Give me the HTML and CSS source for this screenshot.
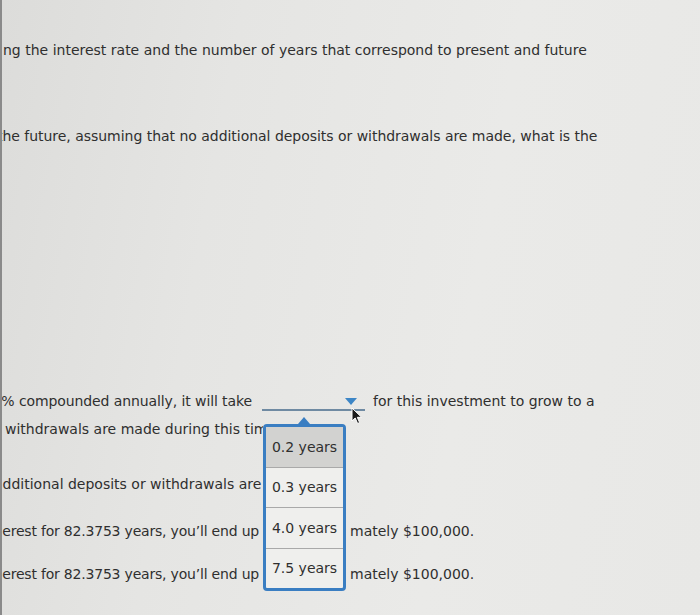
FILE: index.html
```html
<!DOCTYPE html>
<html>
<head>
<meta charset="utf-8">
<link rel="stylesheet" href="styles.css">
</head>
<body>
<div class="page">
  <p class="line l1">ng the interest rate and the number of years that correspond to present and future</p>
  <p class="line l2">the future, assuming that no additional deposits or withdrawals are made, what is the</p>

  <div class="row l3">
    <span class="left end"><span>0% compounded annually, it will take</span></span>
    <span class="select"><span class="caret"></span></span>
    <span class="right">for this investment to grow to a</span>
  </div>
  <div class="row l4">
    <span class="left"><span class="txt">withdrawals are made during this time</span></span>
  </div>
  <div class="row l5">
    <span class="left"><span class="txt">additional deposits or withdrawals are made</span></span>
  </div>
  <div class="row l6">
    <span class="left end tight"><span>erest for 82.3753 years, you’ll end up</span></span>
    <span class="hole"></span>
    <span class="right">mately $100,000.</span>
  </div>
  <div class="row l7">
    <span class="left end tight"><span>erest for 82.3753 years, you’ll end up</span></span>
    <span class="hole"></span>
    <span class="right">mately $100,000.</span>
  </div>

  <div class="popup">
    <div class="option selected">0.2 years</div>
    <div class="option">0.3 years</div>
    <div class="option">4.0 years</div>
    <div class="option">7.5 years</div>
  </div>

  <svg class="cursor" width="12" height="18" viewBox="0 0 12 18">
    <path d="M1 1 L1 14 L4.2 11 L6.6 16.5 L8.6 15.6 L6.3 10.3 L10.6 10.3 Z" fill="#1a1a1a" stroke="#ffffff" stroke-width="1"/>
  </svg>
</div>
</body>
</html>
```

FILE: styles.css
```css
html, body {
  margin: 0;
  padding: 0;
}
body {
  width: 700px;
  height: 615px;
  overflow: hidden;
}
.page {
  position: relative;
  width: 700px;
  height: 615px;
  box-sizing: border-box;
  border-left: 2px solid #8a8a8a;
  background: linear-gradient(100deg, #dcdcda 0%, #e5e5e3 30%, #eaeae8 65%, #e8e8e6 100%);
  font-family: "DejaVu Sans", Verdana, sans-serif;
  font-size: 14px;
  line-height: 20px;
  color: #2f2f2f;
  overflow: hidden;
}
.line {
  margin: 0;
  white-space: nowrap;
  padding-left: 1px;
}
.l1 { margin-top: 40px; }
.l2 { margin-top: 66px; margin-left: -6px; letter-spacing: -0.03px; }

.row {
  display: flex;
  white-space: nowrap;
  height: 20px;
}
.left {
  display: flex;
  overflow: hidden;
  flex: none;
}
.left.end {
  justify-content: flex-end;
}
.tight { letter-spacing: -0.2px; }
.l3 { margin-top: 245px; }
.l3 .left { width: 250px; margin-right: 10px; letter-spacing: -0.1px; }
.select {
  position: relative;
  flex: none;
  width: 103px;
  height: 18px;
  border-bottom: 2px solid #6f8aa2;
  margin-right: 8px;
}
.caret {
  position: absolute;
  left: 83px;
  top: 7px;
  width: 0;
  height: 0;
  border-left: 6.5px solid transparent;
  border-right: 6.5px solid transparent;
  border-top: 7px solid #3d86c6;
}
.l4 { margin-top: 8px; }
.l4 .left { width: 258px; padding-left: 3px; }
.l5 { margin-top: 35px; }
.l5 .left { width: 261px; }
.l5 .txt { margin-left: -8px; }
.l6 { margin-top: 27px; }
.l7 { margin-top: 23px; }
.l6 .left, .l7 .left { width: 257px; }
.hole { flex: none; width: 91px; }

.popup {
  position: absolute;
  left: 261px;
  top: 424px;
  width: 83px;
  height: 167px;
  box-sizing: border-box;
  border: 3px solid #3a7ec2;
  border-radius: 4px;
  background: #efefed;
  display: flex;
  flex-direction: column;
}
.popup::before {
  content: "";
  position: absolute;
  left: 32px;
  top: -10px;
  width: 0;
  height: 0;
  border-left: 6px solid transparent;
  border-right: 6px solid transparent;
  border-bottom: 7px solid #3a7ec2;
}
.option {
  flex: 1;
  display: flex;
  align-items: center;
  justify-content: center;
  border-top: 1px solid #a9a9a9;
  color: #2f2f2f;
  white-space: nowrap;
}
.option:first-child { border-top: none; }
.option.selected { background: #d2d2d0; }
.cursor {
  position: absolute;
  left: 349px;
  top: 407px;
}
```
